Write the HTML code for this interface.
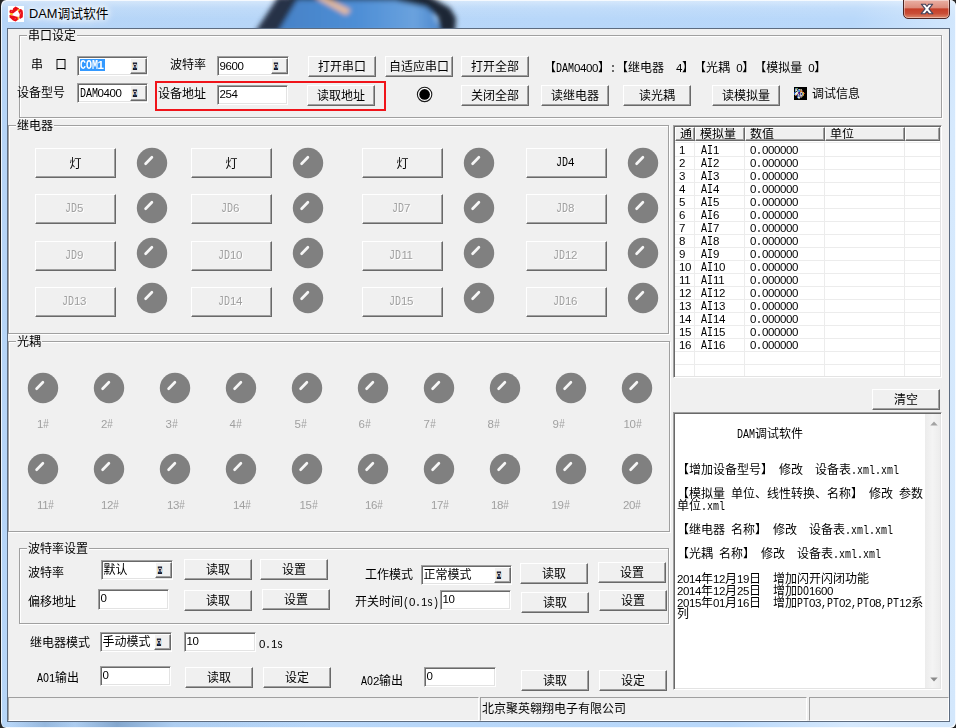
<!DOCTYPE html>
<html lang="zh"><head><meta charset="utf-8"><title>DAM调试软件</title>
<style>
html,body{margin:0;padding:0}
body{width:956px;height:728px;overflow:hidden;position:relative;background:#262626;font-family:"Liberation Mono","Noto Sans CJK SC",sans-serif;font-size:12px;color:#000;text-spacing-trim:space-all}
*{box-sizing:content-box}
.abs,.t,.btn,.edit,.grp,.led{position:absolute}
.t{white-space:nowrap;line-height:12px;height:12px;font-size:12px}
.l{display:inline-block;font-family:"Liberation Mono",monospace;font-size:12px;transform:scaleX(0.8332);transform-origin:0 50%;line-height:12px;vertical-align:baseline}
.gl{background:#f0f0f0;padding:0 1px}
.btn{background:#f0f0f0;border:1px solid;border-color:#fff #696969 #696969 #fff;box-shadow:inset -1px -1px 0 #a0a0a0,inset 1px 1px 0 #f0f0f0;padding:2.5px 1px 0 1px;text-align:center;white-space:nowrap;font-size:12px;overflow:hidden}
.btn.dis{color:#a0a0a0;text-shadow:1px 1px 0 #fff}
.edit{background:#fff;border:1px solid;border-color:#a0a0a0 #fff #fff #a0a0a0;box-shadow:inset 1px 1px 0 #696969,inset -1px -1px 0 #e3e3e3;padding:1px;overflow:hidden}
.et{position:absolute;left:1.5px;top:2px;line-height:12px;white-space:nowrap}
.ct{left:1.5px;top:3px}
.cj{top:4px}
.sel{background:#3399ff;color:#fff;display:inline-block;height:12px;padding-right:1px;position:relative;top:-1px}
.sel .l,.sel .d{font-weight:bold}
.cb{position:absolute;right:0;top:1px;width:13px;background:#f0f0f0;border:1px solid;border-color:#fff #696969 #696969 #fff;box-shadow:inset -1px -1px 0 #a0a0a0;padding:1px}
.cb svg{position:absolute;left:1px;top:2.6px}
.grp{border:1px solid #a0a0a0;box-shadow:1px 1px 0 #fff,inset 1px 1px 0 #fff}
.d{font-family:"Liberation Sans",sans-serif;font-size:11.5px;letter-spacing:-0.396px}
.dt{color:#a0a0a0}
</style></head><body>

<div class="abs" id="frame" style="left:0;top:0;width:955px;height:728px;border-left:1px solid #1c1c1c;border-radius:6px 6px 6px 6px;overflow:hidden;background:linear-gradient(180deg,rgba(255,255,255,.45) 0,rgba(255,255,255,.13) 8px,rgba(255,255,255,0) 19px),linear-gradient(100deg,#b6d5f7 0,#b9d8fa 79%,#d6e9fd 90%,#d3e7fc 100%);box-shadow:inset 1px 1px 0 rgba(255,255,255,.75),inset -1px -1px 0 rgba(255,255,255,.8)">
<svg class="abs" style="left:0;top:0" width="956" height="29" viewBox="0 0 956 29"><defs><filter id="bl" x="-10%" y="-60%" width="120%" height="220%"><feGaussianBlur stdDeviation="2.8"/></filter><linearGradient id="bg1" x1="0" x2="1" y1="0" y2="0"><stop offset="0" stop-color="#447fc4"/><stop offset=".55" stop-color="#4f8fd6"/><stop offset=".85" stop-color="#6aa2de"/><stop offset="1" stop-color="#4a86cc"/></linearGradient></defs><g filter="url(#bl)"><polygon points="286,-3 424,-3 440,32 262,32" fill="url(#bg1)"/><polygon points="277,-3 298,-3 277,32 254,32" fill="#253247"/><polygon points="288,-5 420,-5 420,0.5 288,0" fill="#243043"/><polygon points="396,-5 426,-5 449,8 455,18 454,32 439,32 437,17 425,7 396,1" fill="#1b2636"/><polygon points="313,-3 323,-3 350,10 345,15" fill="#ecbd98"/></g></svg>
<div class="abs" style="left:8px;top:722px;width:300px;height:5px;background:linear-gradient(90deg,rgba(90,130,175,0) 0,rgba(90,130,175,.35) 12%,rgba(90,130,175,.1) 22%,rgba(80,120,165,.5) 36%,rgba(90,130,175,.1) 55%,rgba(90,130,175,0) 100%)"></div>
</div>
<svg class="abs" style="left:8px;top:6px" width="16" height="16" viewBox="0 0 16 16"><rect width="16" height="16" fill="#fff"/><defs><filter id="ib" x="-20%" y="-20%" width="140%" height="140%"><feGaussianBlur stdDeviation=".35"/></filter></defs><g filter="url(#ib)"><path d="M1.6 6.6L2.2 7.6 5 7.4 9.2 4.3 11.2 2.4 7.6 .5 5.2 2.2 4.6 4 2.4 3.8 1.4 5z" fill="#ea0f14"/><path d="M9.6 3.5L10.3 5.8 11.8 8.2 11.2 11.8 12 13 14.8 11.2 15 7 14.6 4.4 13 2.9z" fill="#ea0f14"/><path d="M1.4 8.9L1.7 11.5 5 14.4 7.6 15.6 10.4 13.6 9.8 11 4.6 9.6z" fill="#ea0f14"/><path d="M1.7 6.8L4.9 7.3 4.4 9.4 2.2 8.8z" fill="#f9b81c"/><path d="M9.2 3.7L11.7 3.1 11.5 4.6 10.2 5.4z" fill="#fbc41e"/><path d="M9.4 10.6L10.8 10.8 10.9 13.2 9.9 14z" fill="#f9b81c"/><path d="M3 5.2q1 .6 1.6-.6M12.6 6q-.8 1 .2 2.2M6.4 13q1 .2 1.4-.8" stroke="#f46a6a" stroke-width=".7" fill="none"/></g></svg>
<div class="abs" style="left:29px;top:6px;font-family:'Liberation Sans','Noto Sans CJK SC',sans-serif;font-size:12.8px;line-height:16px;white-space:nowrap;text-shadow:0 0 5px #fff,0 0 7px #fff,0 0 10px #fff,0 0 12px rgba(255,255,255,.8)">DAM调试软件</div>
<div class="abs" style="left:903px;top:-1px;width:45px;height:18px;border:1px solid #4a2422;border-radius:0 0 5px 5px;background:linear-gradient(#eab0a4 0,#dd8d7d 42%,#c53f29 50%,#c94e37 75%,#dc8a6e 100%);box-shadow:inset 0 0 0 1px rgba(255,255,255,.4)"><svg style="position:absolute;left:16px;top:3.2px" width="14" height="12" viewBox="0 0 14 12"><path d="M1.3 1.2h3.9l1.8 2.3 1.8-2.3h3.9L8.9 5.8l3.9 4.9H8.8L7 8.3 5.2 10.7H1.2l3.9-4.9z" fill="#fff" stroke="#45435a" stroke-width="1.1" stroke-linejoin="round"/></svg></div>
<div class="abs" style="left:7px;top:28px;width:943px;height:694px;background:#5d6c80"></div>
<div class="abs" style="left:8px;top:29px;width:941px;height:692px;background:#f0f0f0"></div>
<div class="abs" id="client" style="left:0;top:0;width:956px;height:728px;will-change:transform">
<div class="grp" style="left:19px;top:35px;width:921px;height:81px"></div>
<div class="t gl" style="left:27px;top:31px">串口设定</div>
<div class="t " style="left:31px;top:60px;letter-spacing:0;word-spacing:0">串<span class="l" style="margin-right:-2.40px">&nbsp;&nbsp;</span>口</div>
<div class="edit" style="left:77px;top:56px;width:67px;height:16px"><div class="et ct"><span class="sel"><span class="l" style="margin-right:-3.60px">COM</span><span class="d">1</span></span></div><div class="cb" style="height:12px"><svg width="6" height="8.6" viewBox="0 0 7 9" preserveAspectRatio="none"><path d="M.2 .5h1v8h-1z" fill="#f3d27a" opacity=".7"/><path d="M5.6 .5h1v8h-1z" fill="#8fd6f5" opacity=".7"/><path d="M1 .4H5.8V2.2L4.2 4.3V4.9L5.8 6.9V8.6H1V6.9L2.6 4.9V4.3L1 2.2Z" fill="#15152a"/><path d="M1.8 2h3.2v.9H1.8z" fill="#fff"/><path d="M2.9 5.4l.5-.6.5.6 .6 1.2H2.3z" fill="#5b9fe0"/><path d="M1.2 3.2l1 .9-1 .9zM5.6 3.2l-1 .9 1 .9z" fill="#c0392b" opacity=".55"/></svg></div></div>
<div class="t " style="left:170px;top:60px;">波特率</div>
<div class="edit" style="left:217px;top:56px;width:68px;height:16px"><div class="et ct"><span class="d">9600</span></div><div class="cb" style="height:12px"><svg width="6" height="8.6" viewBox="0 0 7 9" preserveAspectRatio="none"><path d="M.2 .5h1v8h-1z" fill="#f3d27a" opacity=".7"/><path d="M5.6 .5h1v8h-1z" fill="#8fd6f5" opacity=".7"/><path d="M1 .4H5.8V2.2L4.2 4.3V4.9L5.8 6.9V8.6H1V6.9L2.6 4.9V4.3L1 2.2Z" fill="#15152a"/><path d="M1.8 2h3.2v.9H1.8z" fill="#fff"/><path d="M2.9 5.4l.5-.6.5.6 .6 1.2H2.3z" fill="#5b9fe0"/><path d="M1.2 3.2l1 .9-1 .9zM5.6 3.2l-1 .9 1 .9z" fill="#c0392b" opacity=".55"/></svg></div></div>
<div class="btn" style="left:308px;top:56px;width:64px;height:16.5px;line-height:17px">打开串口</div>
<div class="btn" style="left:385px;top:56px;width:64px;height:16.5px;line-height:17px">自适应串口</div>
<div class="btn" style="left:461px;top:56px;width:64px;height:16.5px;line-height:17px">打开全部</div>
<div class="t " style="left:544px;top:62px;">【<span class="l" style="margin-right:-3.60px">DAM</span><span class="d">0400</span>】<span class="l" style="margin-right:-1.20px">:</span>【继电器<span class="l" style="margin-right:-2.40px">&nbsp;&nbsp;</span><span class="d">4</span>】【光耦<span class="l" style="margin-right:-1.20px">&nbsp;</span><span class="d">0</span>】【模拟量<span class="l" style="margin-right:-1.20px">&nbsp;</span><span class="d">0</span>】</div>
<div class="t " style="left:17px;top:88px;">设备型号</div>
<div class="edit" style="left:77px;top:83px;width:67px;height:16px"><div class="et ct"><span class="l" style="margin-right:-3.60px">DAM</span><span class="d">0400</span></div><div class="cb" style="height:12px"><svg width="6" height="8.6" viewBox="0 0 7 9" preserveAspectRatio="none"><path d="M.2 .5h1v8h-1z" fill="#f3d27a" opacity=".7"/><path d="M5.6 .5h1v8h-1z" fill="#8fd6f5" opacity=".7"/><path d="M1 .4H5.8V2.2L4.2 4.3V4.9L5.8 6.9V8.6H1V6.9L2.6 4.9V4.3L1 2.2Z" fill="#15152a"/><path d="M1.8 2h3.2v.9H1.8z" fill="#fff"/><path d="M2.9 5.4l.5-.6.5.6 .6 1.2H2.3z" fill="#5b9fe0"/><path d="M1.2 3.2l1 .9-1 .9zM5.6 3.2l-1 .9 1 .9z" fill="#c0392b" opacity=".55"/></svg></div></div>
<div class="abs" style="left:155px;top:81px;width:227px;height:25.5px;border:2px solid #f0141a"></div>
<div class="t " style="left:158px;top:89px;">设备地址</div>
<div class="edit" style="left:217px;top:85px;width:67px;height:16px"><div class="et"><span class="d">254</span></div></div>
<div class="btn" style="left:307px;top:85px;width:64px;height:16.5px;line-height:17px">读取地址</div>
<svg class="abs" style="left:416px;top:86px" width="17" height="17" viewBox="0 0 17 17"><circle cx="8.6" cy="8.4" r="7.2" fill="#fff" stroke="#1a1a1a" stroke-width="1.1"/><circle cx="8.6" cy="8.4" r="5.3" fill="#000"/></svg>
<div class="btn" style="left:461px;top:85px;width:64px;height:16.5px;line-height:17px">关闭全部</div>
<div class="btn" style="left:541px;top:85px;width:64px;height:16.5px;line-height:17px">读继电器</div>
<div class="btn" style="left:623px;top:85px;width:64px;height:16.5px;line-height:17px">读光耦</div>
<div class="btn" style="left:712px;top:85px;width:64px;height:16.5px;line-height:17px">读模拟量</div>
<svg class="abs" style="left:794px;top:87px" width="13" height="13" viewBox="0 0 13 13"><rect width="13" height="13" fill="#000"/><defs><filter id="nb"><feGaussianBlur stdDeviation=".35"/></filter></defs><g filter="url(#nb)"><path d="M1 1h1v1h-1z" fill="#3d6fb0"/><path d="M2 1h1v1h-1z" fill="#7aa06a"/><path d="M3 1h1v1h-1z" fill="#5b8f6a"/><path d="M1 2h1v1h-1z" fill="#9ab0b8"/><path d="M2 2h1v1h-1z" fill="#c8b89a"/><path d="M3 2h1v1h-1z" fill="#3a3030"/><path d="M4 2h1v1h-1z" fill="#4a8ad8"/><path d="M5 2h1v1h-1z" fill="#d8c8a0"/><path d="M6 2h1v1h-1z" fill="#8a7a60"/><path d="M7 2h1v1h-1z" fill="#b0a890"/><path d="M1 3h1v1h-1z" fill="#8ac0d8"/><path d="M2 3h1v1h-1z" fill="#e8e0d0"/><path d="M3 3h1v1h-1z" fill="#6a5a8a"/><path d="M4 3h1v1h-1z" fill="#3a7ad0"/><path d="M5 3h1v1h-1z" fill="#4a90e0"/><path d="M6 3h1v1h-1z" fill="#c07a30"/><path d="M7 3h1v1h-1z" fill="#a8a090"/><path d="M8 3h1v1h-1z" fill="#5a2a20"/><path d="M1 4h1v1h-1z" fill="#58a078"/><path d="M2 4h1v1h-1z" fill="#303040"/><path d="M3 4h1v1h-1z" fill="#a0b0c0"/><path d="M4 4h1v1h-1z" fill="#68c0a0"/><path d="M5 4h1v1h-1z" fill="#3a70c0"/><path d="M6 4h1v1h-1z" fill="#c86a20"/><path d="M7 4h1v1h-1z" fill="#d89040"/><path d="M8 4h1v1h-1z" fill="#7a3020"/><path d="M0 5h1v1h-1z" fill="#2040a0"/><path d="M1 5h1v1h-1z" fill="#3050b0"/><path d="M2 5h1v1h-1z" fill="#e8e8f0"/><path d="M3 5h1v1h-1z" fill="#f0e8c0"/><path d="M4 5h1v1h-1z" fill="#5a2a90"/><path d="M5 5h1v1h-1z" fill="#401880"/><path d="M6 5h1v1h-1z" fill="#b0a8c0"/><path d="M7 5h1v1h-1z" fill="#d0c8d0"/><path d="M8 5h1v1h-1z" fill="#c09050"/><path d="M9 5h1v1h-1z" fill="#e0a040"/><path d="M0 6h1v1h-1z" fill="#2858a8"/><path d="M1 6h1v1h-1z" fill="#d8e8f0"/><path d="M2 6h1v1h-1z" fill="#f8f0c8"/><path d="M3 6h1v1h-1z" fill="#e8d8b0"/><path d="M4 6h1v1h-1z" fill="#6a3aa0"/><path d="M5 6h1v1h-1z" fill="#5828a0"/><path d="M6 6h1v1h-1z" fill="#90c0b0"/><path d="M7 6h1v1h-1z" fill="#401870"/><path d="M8 6h1v1h-1z" fill="#70c8a8"/><path d="M9 6h1v1h-1z" fill="#e09830"/><path d="M10 6h1v1h-1z" fill="#b03020"/><path d="M0 7h1v1h-1z" fill="#3088b8"/><path d="M1 7h1v1h-1z" fill="#c0d0e0"/><path d="M2 7h1v1h-1z" fill="#e8e0c0"/><path d="M3 7h1v1h-1z" fill="#7a3a90"/><path d="M4 7h1v1h-1z" fill="#b0e0c8"/><path d="M5 7h1v1h-1z" fill="#4a2a80"/><path d="M6 7h1v1h-1z" fill="#a8b0d0"/><path d="M7 7h1v1h-1z" fill="#5a3a90"/><path d="M8 7h1v1h-1z" fill="#80d0b0"/><path d="M9 7h1v1h-1z" fill="#d8a040"/><path d="M1 8h1v1h-1z" fill="#c87a40"/><path d="M2 8h1v1h-1z" fill="#403048"/><path d="M3 8h1v1h-1z" fill="#5a4a80"/><path d="M4 8h1v1h-1z" fill="#80a8c8"/><path d="M5 8h1v1h-1z" fill="#7a6aa0"/><path d="M6 8h1v1h-1z" fill="#c0b8d8"/><path d="M7 8h1v1h-1z" fill="#d0c8e0"/><path d="M8 8h1v1h-1z" fill="#a09070"/><path d="M9 8h1v1h-1z" fill="#b07a30"/><path d="M3 9h1v1h-1z" fill="#3a5aa0"/><path d="M4 9h1v1h-1z" fill="#a0b8d0"/><path d="M5 9h1v1h-1z" fill="#6a80b0"/><path d="M6 9h1v1h-1z" fill="#8a80a0"/><path d="M7 9h1v1h-1z" fill="#a89880"/><path d="M8 9h1v1h-1z" fill="#6a6040"/><path d="M3 10h1v1h-1z" fill="#4a80d0"/><path d="M4 10h1v1h-1z" fill="#f0f0e0"/><path d="M5 10h1v1h-1z" fill="#e8e0b0"/><path d="M6 10h1v1h-1z" fill="#505060"/><path d="M7 10h1v1h-1z" fill="#606850"/><path d="M4 11h1v1h-1z" fill="#607090"/><path d="M5 11h1v1h-1z" fill="#8a8870"/></g></svg>
<div class="t " style="left:812px;top:89px;">调试信息</div>
<div class="grp" style="left:8px;top:125px;width:659px;height:207px"></div>
<div class="t gl" style="left:16px;top:121px">继电器</div>
<div class="btn" style="left:35px;top:148px;width:77px;height:25.5px;line-height:26px">灯</div>
<svg class="led" style="left:136px;top:147px" width="32" height="32" viewBox="0 0 32 32"><circle cx="16" cy="16" r="15.2" fill="#808080"/><path d="M9.6 16.7L15.9 10.2" stroke="#f6f6f6" stroke-width="2.7" stroke-linecap="round"/></svg>
<div class="btn" style="left:191px;top:148px;width:77px;height:25.5px;line-height:26px">灯</div>
<svg class="led" style="left:292px;top:147px" width="32" height="32" viewBox="0 0 32 32"><circle cx="16" cy="16" r="15.2" fill="#808080"/><path d="M9.6 16.7L15.9 10.2" stroke="#f6f6f6" stroke-width="2.7" stroke-linecap="round"/></svg>
<div class="btn" style="left:362px;top:148px;width:77px;height:25.5px;line-height:26px">灯</div>
<svg class="led" style="left:463px;top:147px" width="32" height="32" viewBox="0 0 32 32"><circle cx="16" cy="16" r="15.2" fill="#808080"/><path d="M9.6 16.7L15.9 10.2" stroke="#f6f6f6" stroke-width="2.7" stroke-linecap="round"/></svg>
<div class="btn" style="left:526px;top:148px;width:77px;height:25.5px;line-height:26px"><span style="position:relative;top:-2.3px;left:-1.5px"><span class="l" style="margin-right:-2.40px">JD</span><span class="d">4</span></span></div>
<svg class="led" style="left:627px;top:147px" width="32" height="32" viewBox="0 0 32 32"><circle cx="16" cy="16" r="15.2" fill="#808080"/><path d="M9.6 16.7L15.9 10.2" stroke="#f6f6f6" stroke-width="2.7" stroke-linecap="round"/></svg>
<div class="btn dis" style="left:35px;top:194px;width:77px;height:25.5px;line-height:26px"><span style="position:relative;top:-2.3px;left:-1.5px"><span class="l" style="margin-right:-2.40px">JD</span><span class="d">5</span></span></div>
<svg class="led" style="left:136px;top:192px" width="32" height="32" viewBox="0 0 32 32"><circle cx="16" cy="16" r="15.2" fill="#808080"/><path d="M9.6 16.7L15.9 10.2" stroke="#f6f6f6" stroke-width="2.7" stroke-linecap="round"/></svg>
<div class="btn dis" style="left:191px;top:194px;width:77px;height:25.5px;line-height:26px"><span style="position:relative;top:-2.3px;left:-1.5px"><span class="l" style="margin-right:-2.40px">JD</span><span class="d">6</span></span></div>
<svg class="led" style="left:292px;top:192px" width="32" height="32" viewBox="0 0 32 32"><circle cx="16" cy="16" r="15.2" fill="#808080"/><path d="M9.6 16.7L15.9 10.2" stroke="#f6f6f6" stroke-width="2.7" stroke-linecap="round"/></svg>
<div class="btn dis" style="left:362px;top:194px;width:77px;height:25.5px;line-height:26px"><span style="position:relative;top:-2.3px;left:-1.5px"><span class="l" style="margin-right:-2.40px">JD</span><span class="d">7</span></span></div>
<svg class="led" style="left:463px;top:192px" width="32" height="32" viewBox="0 0 32 32"><circle cx="16" cy="16" r="15.2" fill="#808080"/><path d="M9.6 16.7L15.9 10.2" stroke="#f6f6f6" stroke-width="2.7" stroke-linecap="round"/></svg>
<div class="btn dis" style="left:526px;top:194px;width:77px;height:25.5px;line-height:26px"><span style="position:relative;top:-2.3px;left:-1.5px"><span class="l" style="margin-right:-2.40px">JD</span><span class="d">8</span></span></div>
<svg class="led" style="left:627px;top:192px" width="32" height="32" viewBox="0 0 32 32"><circle cx="16" cy="16" r="15.2" fill="#808080"/><path d="M9.6 16.7L15.9 10.2" stroke="#f6f6f6" stroke-width="2.7" stroke-linecap="round"/></svg>
<div class="btn dis" style="left:35px;top:241px;width:77px;height:25.5px;line-height:26px"><span style="position:relative;top:-2.3px;left:-1.5px"><span class="l" style="margin-right:-2.40px">JD</span><span class="d">9</span></span></div>
<svg class="led" style="left:136px;top:237px" width="32" height="32" viewBox="0 0 32 32"><circle cx="16" cy="16" r="15.2" fill="#808080"/><path d="M9.6 16.7L15.9 10.2" stroke="#f6f6f6" stroke-width="2.7" stroke-linecap="round"/></svg>
<div class="btn dis" style="left:191px;top:241px;width:77px;height:25.5px;line-height:26px"><span style="position:relative;top:-2.3px;left:-1.5px"><span class="l" style="margin-right:-2.40px">JD</span><span class="d">10</span></span></div>
<svg class="led" style="left:292px;top:237px" width="32" height="32" viewBox="0 0 32 32"><circle cx="16" cy="16" r="15.2" fill="#808080"/><path d="M9.6 16.7L15.9 10.2" stroke="#f6f6f6" stroke-width="2.7" stroke-linecap="round"/></svg>
<div class="btn dis" style="left:362px;top:241px;width:77px;height:25.5px;line-height:26px"><span style="position:relative;top:-2.3px;left:-1.5px"><span class="l" style="margin-right:-2.40px">JD</span><span class="d">11</span></span></div>
<svg class="led" style="left:463px;top:237px" width="32" height="32" viewBox="0 0 32 32"><circle cx="16" cy="16" r="15.2" fill="#808080"/><path d="M9.6 16.7L15.9 10.2" stroke="#f6f6f6" stroke-width="2.7" stroke-linecap="round"/></svg>
<div class="btn dis" style="left:526px;top:241px;width:77px;height:25.5px;line-height:26px"><span style="position:relative;top:-2.3px;left:-1.5px"><span class="l" style="margin-right:-2.40px">JD</span><span class="d">12</span></span></div>
<svg class="led" style="left:627px;top:237px" width="32" height="32" viewBox="0 0 32 32"><circle cx="16" cy="16" r="15.2" fill="#808080"/><path d="M9.6 16.7L15.9 10.2" stroke="#f6f6f6" stroke-width="2.7" stroke-linecap="round"/></svg>
<div class="btn dis" style="left:35px;top:287px;width:77px;height:25.5px;line-height:26px"><span style="position:relative;top:-2.3px;left:-1.5px"><span class="l" style="margin-right:-2.40px">JD</span><span class="d">13</span></span></div>
<svg class="led" style="left:136px;top:282px" width="32" height="32" viewBox="0 0 32 32"><circle cx="16" cy="16" r="15.2" fill="#808080"/><path d="M9.6 16.7L15.9 10.2" stroke="#f6f6f6" stroke-width="2.7" stroke-linecap="round"/></svg>
<div class="btn dis" style="left:191px;top:287px;width:77px;height:25.5px;line-height:26px"><span style="position:relative;top:-2.3px;left:-1.5px"><span class="l" style="margin-right:-2.40px">JD</span><span class="d">14</span></span></div>
<svg class="led" style="left:292px;top:282px" width="32" height="32" viewBox="0 0 32 32"><circle cx="16" cy="16" r="15.2" fill="#808080"/><path d="M9.6 16.7L15.9 10.2" stroke="#f6f6f6" stroke-width="2.7" stroke-linecap="round"/></svg>
<div class="btn dis" style="left:362px;top:287px;width:77px;height:25.5px;line-height:26px"><span style="position:relative;top:-2.3px;left:-1.5px"><span class="l" style="margin-right:-2.40px">JD</span><span class="d">15</span></span></div>
<svg class="led" style="left:463px;top:282px" width="32" height="32" viewBox="0 0 32 32"><circle cx="16" cy="16" r="15.2" fill="#808080"/><path d="M9.6 16.7L15.9 10.2" stroke="#f6f6f6" stroke-width="2.7" stroke-linecap="round"/></svg>
<div class="btn dis" style="left:526px;top:287px;width:77px;height:25.5px;line-height:26px"><span style="position:relative;top:-2.3px;left:-1.5px"><span class="l" style="margin-right:-2.40px">JD</span><span class="d">16</span></span></div>
<svg class="led" style="left:627px;top:282px" width="32" height="32" viewBox="0 0 32 32"><circle cx="16" cy="16" r="15.2" fill="#808080"/><path d="M9.6 16.7L15.9 10.2" stroke="#f6f6f6" stroke-width="2.7" stroke-linecap="round"/></svg>
<div class="grp" style="left:8px;top:341px;width:660px;height:189px"></div>
<div class="t gl" style="left:16px;top:337px">光耦</div>
<svg class="led" style="left:27px;top:371.5px" width="32" height="32" viewBox="0 0 32 32"><circle cx="16" cy="16" r="15.2" fill="#808080"/><path d="M9.6 16.7L15.9 10.2" stroke="#f6f6f6" stroke-width="2.7" stroke-linecap="round"/></svg>
<svg class="led" style="left:27px;top:453px" width="32" height="32" viewBox="0 0 32 32"><circle cx="16" cy="16" r="15.2" fill="#808080"/><path d="M9.6 16.7L15.9 10.2" stroke="#f6f6f6" stroke-width="2.7" stroke-linecap="round"/></svg>
<svg class="led" style="left:93px;top:371.5px" width="32" height="32" viewBox="0 0 32 32"><circle cx="16" cy="16" r="15.2" fill="#808080"/><path d="M9.6 16.7L15.9 10.2" stroke="#f6f6f6" stroke-width="2.7" stroke-linecap="round"/></svg>
<svg class="led" style="left:93px;top:453px" width="32" height="32" viewBox="0 0 32 32"><circle cx="16" cy="16" r="15.2" fill="#808080"/><path d="M9.6 16.7L15.9 10.2" stroke="#f6f6f6" stroke-width="2.7" stroke-linecap="round"/></svg>
<svg class="led" style="left:159px;top:371.5px" width="32" height="32" viewBox="0 0 32 32"><circle cx="16" cy="16" r="15.2" fill="#808080"/><path d="M9.6 16.7L15.9 10.2" stroke="#f6f6f6" stroke-width="2.7" stroke-linecap="round"/></svg>
<svg class="led" style="left:159px;top:453px" width="32" height="32" viewBox="0 0 32 32"><circle cx="16" cy="16" r="15.2" fill="#808080"/><path d="M9.6 16.7L15.9 10.2" stroke="#f6f6f6" stroke-width="2.7" stroke-linecap="round"/></svg>
<svg class="led" style="left:225px;top:371.5px" width="32" height="32" viewBox="0 0 32 32"><circle cx="16" cy="16" r="15.2" fill="#808080"/><path d="M9.6 16.7L15.9 10.2" stroke="#f6f6f6" stroke-width="2.7" stroke-linecap="round"/></svg>
<svg class="led" style="left:225px;top:453px" width="32" height="32" viewBox="0 0 32 32"><circle cx="16" cy="16" r="15.2" fill="#808080"/><path d="M9.6 16.7L15.9 10.2" stroke="#f6f6f6" stroke-width="2.7" stroke-linecap="round"/></svg>
<svg class="led" style="left:291px;top:371.5px" width="32" height="32" viewBox="0 0 32 32"><circle cx="16" cy="16" r="15.2" fill="#808080"/><path d="M9.6 16.7L15.9 10.2" stroke="#f6f6f6" stroke-width="2.7" stroke-linecap="round"/></svg>
<svg class="led" style="left:291px;top:453px" width="32" height="32" viewBox="0 0 32 32"><circle cx="16" cy="16" r="15.2" fill="#808080"/><path d="M9.6 16.7L15.9 10.2" stroke="#f6f6f6" stroke-width="2.7" stroke-linecap="round"/></svg>
<svg class="led" style="left:357px;top:371.5px" width="32" height="32" viewBox="0 0 32 32"><circle cx="16" cy="16" r="15.2" fill="#808080"/><path d="M9.6 16.7L15.9 10.2" stroke="#f6f6f6" stroke-width="2.7" stroke-linecap="round"/></svg>
<svg class="led" style="left:357px;top:453px" width="32" height="32" viewBox="0 0 32 32"><circle cx="16" cy="16" r="15.2" fill="#808080"/><path d="M9.6 16.7L15.9 10.2" stroke="#f6f6f6" stroke-width="2.7" stroke-linecap="round"/></svg>
<svg class="led" style="left:423px;top:371.5px" width="32" height="32" viewBox="0 0 32 32"><circle cx="16" cy="16" r="15.2" fill="#808080"/><path d="M9.6 16.7L15.9 10.2" stroke="#f6f6f6" stroke-width="2.7" stroke-linecap="round"/></svg>
<svg class="led" style="left:423px;top:453px" width="32" height="32" viewBox="0 0 32 32"><circle cx="16" cy="16" r="15.2" fill="#808080"/><path d="M9.6 16.7L15.9 10.2" stroke="#f6f6f6" stroke-width="2.7" stroke-linecap="round"/></svg>
<svg class="led" style="left:489px;top:371.5px" width="32" height="32" viewBox="0 0 32 32"><circle cx="16" cy="16" r="15.2" fill="#808080"/><path d="M9.6 16.7L15.9 10.2" stroke="#f6f6f6" stroke-width="2.7" stroke-linecap="round"/></svg>
<svg class="led" style="left:489px;top:453px" width="32" height="32" viewBox="0 0 32 32"><circle cx="16" cy="16" r="15.2" fill="#808080"/><path d="M9.6 16.7L15.9 10.2" stroke="#f6f6f6" stroke-width="2.7" stroke-linecap="round"/></svg>
<svg class="led" style="left:555px;top:371.5px" width="32" height="32" viewBox="0 0 32 32"><circle cx="16" cy="16" r="15.2" fill="#808080"/><path d="M9.6 16.7L15.9 10.2" stroke="#f6f6f6" stroke-width="2.7" stroke-linecap="round"/></svg>
<svg class="led" style="left:555px;top:453px" width="32" height="32" viewBox="0 0 32 32"><circle cx="16" cy="16" r="15.2" fill="#808080"/><path d="M9.6 16.7L15.9 10.2" stroke="#f6f6f6" stroke-width="2.7" stroke-linecap="round"/></svg>
<svg class="led" style="left:621px;top:371.5px" width="32" height="32" viewBox="0 0 32 32"><circle cx="16" cy="16" r="15.2" fill="#808080"/><path d="M9.6 16.7L15.9 10.2" stroke="#f6f6f6" stroke-width="2.7" stroke-linecap="round"/></svg>
<svg class="led" style="left:621px;top:453px" width="32" height="32" viewBox="0 0 32 32"><circle cx="16" cy="16" r="15.2" fill="#808080"/><path d="M9.6 16.7L15.9 10.2" stroke="#f6f6f6" stroke-width="2.7" stroke-linecap="round"/></svg>
<div class="t dt" style="left:37px;top:418px;"><span class="d">1</span><span class="l" style="margin-right:-1.20px">#</span></div>
<div class="t dt" style="left:37px;top:499px;"><span class="d">11</span><span class="l" style="margin-right:-1.20px">#</span></div>
<div class="t dt" style="left:101px;top:418px;"><span class="d">2</span><span class="l" style="margin-right:-1.20px">#</span></div>
<div class="t dt" style="left:101px;top:499px;"><span class="d">12</span><span class="l" style="margin-right:-1.20px">#</span></div>
<div class="t dt" style="left:165.5px;top:418px;"><span class="d">3</span><span class="l" style="margin-right:-1.20px">#</span></div>
<div class="t dt" style="left:167px;top:499px;"><span class="d">13</span><span class="l" style="margin-right:-1.20px">#</span></div>
<div class="t dt" style="left:229.5px;top:418px;"><span class="d">4</span><span class="l" style="margin-right:-1.20px">#</span></div>
<div class="t dt" style="left:233px;top:499px;"><span class="d">14</span><span class="l" style="margin-right:-1.20px">#</span></div>
<div class="t dt" style="left:294.5px;top:418px;"><span class="d">5</span><span class="l" style="margin-right:-1.20px">#</span></div>
<div class="t dt" style="left:299.5px;top:499px;"><span class="d">15</span><span class="l" style="margin-right:-1.20px">#</span></div>
<div class="t dt" style="left:358.5px;top:418px;"><span class="d">6</span><span class="l" style="margin-right:-1.20px">#</span></div>
<div class="t dt" style="left:365px;top:499px;"><span class="d">16</span><span class="l" style="margin-right:-1.20px">#</span></div>
<div class="t dt" style="left:423.5px;top:418px;"><span class="d">7</span><span class="l" style="margin-right:-1.20px">#</span></div>
<div class="t dt" style="left:431px;top:499px;"><span class="d">17</span><span class="l" style="margin-right:-1.20px">#</span></div>
<div class="t dt" style="left:487.5px;top:418px;"><span class="d">8</span><span class="l" style="margin-right:-1.20px">#</span></div>
<div class="t dt" style="left:491px;top:499px;"><span class="d">18</span><span class="l" style="margin-right:-1.20px">#</span></div>
<div class="t dt" style="left:552.5px;top:418px;"><span class="d">9</span><span class="l" style="margin-right:-1.20px">#</span></div>
<div class="t dt" style="left:551.5px;top:499px;"><span class="d">19</span><span class="l" style="margin-right:-1.20px">#</span></div>
<div class="t dt" style="left:623.5px;top:418px;"><span class="d">10</span><span class="l" style="margin-right:-1.20px">#</span></div>
<div class="t dt" style="left:623px;top:499px;"><span class="d">20</span><span class="l" style="margin-right:-1.20px">#</span></div>
<div class="grp" style="left:19px;top:548px;width:648px;height:74px"></div>
<div class="t gl" style="left:27px;top:544px">波特率设置</div>
<div class="t " style="left:28px;top:568px;">波特率</div>
<div class="edit" style="left:101px;top:560px;width:68px;height:16px"><div class="et ct cj">默认</div><div class="cb" style="height:12px"><svg width="6" height="8.6" viewBox="0 0 7 9" preserveAspectRatio="none"><path d="M.2 .5h1v8h-1z" fill="#f3d27a" opacity=".7"/><path d="M5.6 .5h1v8h-1z" fill="#8fd6f5" opacity=".7"/><path d="M1 .4H5.8V2.2L4.2 4.3V4.9L5.8 6.9V8.6H1V6.9L2.6 4.9V4.3L1 2.2Z" fill="#15152a"/><path d="M1.8 2h3.2v.9H1.8z" fill="#fff"/><path d="M2.9 5.4l.5-.6.5.6 .6 1.2H2.3z" fill="#5b9fe0"/><path d="M1.2 3.2l1 .9-1 .9zM5.6 3.2l-1 .9 1 .9z" fill="#c0392b" opacity=".55"/></svg></div></div>
<div class="btn" style="left:184px;top:559px;width:64px;height:16.5px;line-height:17px">读取</div>
<div class="btn" style="left:260px;top:559px;width:64px;height:16.5px;line-height:17px">设置</div>
<div class="t " style="left:28px;top:597px;">偏移地址</div>
<div class="edit" style="left:98px;top:589px;width:67px;height:17px"><div class="et"><span class="d">0</span></div></div>
<div class="btn" style="left:184px;top:590px;width:64px;height:16.5px;line-height:17px">读取</div>
<div class="btn" style="left:262px;top:589px;width:64px;height:16.5px;line-height:17px">设置</div>
<div class="t " style="left:365px;top:570px;">工作模式</div>
<div class="edit" style="left:421px;top:565px;width:87px;height:16px"><div class="et ct cj">正常模式</div><div class="cb" style="height:12px"><svg width="6" height="8.6" viewBox="0 0 7 9" preserveAspectRatio="none"><path d="M.2 .5h1v8h-1z" fill="#f3d27a" opacity=".7"/><path d="M5.6 .5h1v8h-1z" fill="#8fd6f5" opacity=".7"/><path d="M1 .4H5.8V2.2L4.2 4.3V4.9L5.8 6.9V8.6H1V6.9L2.6 4.9V4.3L1 2.2Z" fill="#15152a"/><path d="M1.8 2h3.2v.9H1.8z" fill="#fff"/><path d="M2.9 5.4l.5-.6.5.6 .6 1.2H2.3z" fill="#5b9fe0"/><path d="M1.2 3.2l1 .9-1 .9zM5.6 3.2l-1 .9 1 .9z" fill="#c0392b" opacity=".55"/></svg></div></div>
<div class="btn" style="left:520px;top:563px;width:64px;height:16.5px;line-height:17px">读取</div>
<div class="btn" style="left:598px;top:562px;width:64px;height:16.5px;line-height:17px">设置</div>
<div class="t " style="left:355px;top:596px;">开关时间<span class="l" style="margin-right:-1.20px">(</span><span class="d">0</span><span class="l" style="margin-right:-1.20px">.</span><span class="d">1</span><span class="l" style="margin-right:-2.40px">s)</span></div>
<div class="edit" style="left:440px;top:590px;width:67px;height:16px"><div class="et"><span class="d">10</span></div></div>
<div class="btn" style="left:521px;top:592px;width:64px;height:16.5px;line-height:17px">读取</div>
<div class="btn" style="left:599px;top:590px;width:64px;height:16.5px;line-height:17px">设置</div>
<div class="t " style="left:30px;top:638px;">继电器模式</div>
<div class="edit" style="left:100px;top:632px;width:68px;height:16px"><div class="et ct cj">手动模式</div><div class="cb" style="height:12px"><svg width="6" height="8.6" viewBox="0 0 7 9" preserveAspectRatio="none"><path d="M.2 .5h1v8h-1z" fill="#f3d27a" opacity=".7"/><path d="M5.6 .5h1v8h-1z" fill="#8fd6f5" opacity=".7"/><path d="M1 .4H5.8V2.2L4.2 4.3V4.9L5.8 6.9V8.6H1V6.9L2.6 4.9V4.3L1 2.2Z" fill="#15152a"/><path d="M1.8 2h3.2v.9H1.8z" fill="#fff"/><path d="M2.9 5.4l.5-.6.5.6 .6 1.2H2.3z" fill="#5b9fe0"/><path d="M1.2 3.2l1 .9-1 .9zM5.6 3.2l-1 .9 1 .9z" fill="#c0392b" opacity=".55"/></svg></div></div>
<div class="edit" style="left:184px;top:632px;width:68px;height:16px"><div class="et"><span class="d">10</span></div></div>
<div class="t " style="left:259px;top:638px;"><span class="d">0</span><span class="l" style="margin-right:-1.20px">.</span><span class="d">1</span><span class="l" style="margin-right:-1.20px">s</span></div>
<div class="t " style="left:37px;top:672px;"><span class="l" style="margin-right:-2.40px">AO</span><span class="d">1</span>输出</div>
<div class="edit" style="left:100px;top:666px;width:67px;height:16px"><div class="et"><span class="d">0</span></div></div>
<div class="btn" style="left:185px;top:667px;width:64px;height:16.5px;line-height:17px">读取</div>
<div class="btn" style="left:263px;top:667px;width:64px;height:16.5px;line-height:17px">设定</div>
<div class="t " style="left:361px;top:675px;"><span class="l" style="margin-right:-2.40px">AO</span><span class="d">2</span>输出</div>
<div class="edit" style="left:424px;top:667px;width:68px;height:16px"><div class="et"><span class="d">0</span></div></div>
<div class="btn" style="left:521px;top:670px;width:64px;height:16.5px;line-height:17px">读取</div>
<div class="btn" style="left:599px;top:670px;width:64px;height:16.5px;line-height:17px">设定</div>
<div class="abs" style="left:8px;top:697px;width:469px;height:22px;border:1px solid;border-color:#a0a0a0 #fff #fff #a0a0a0"></div>
<div class="abs" style="left:480px;top:697px;width:325px;height:22px;border:1px solid;border-color:#a0a0a0 #fff #fff #a0a0a0"></div>
<div class="abs" style="left:809px;top:697px;width:138px;height:22px;border:1px solid;border-color:#a0a0a0 #fff #fff #a0a0a0"></div>
<div class="t " style="left:482px;top:704px;">北京聚英翱翔电子有限公司</div>
<div class="edit" style="left:673px;top:125px;width:265px;height:249px"></div>
<div class="abs hd" style="left:675px;top:127px;width:18px;height:12px;background:#f0f0f0;border:1px solid;border-color:#fff #696969 #696969 #fff;box-shadow:inset -1px -1px 0 #a0a0a0;overflow:hidden"><div class="t" style="left:4px;top:1px">通</div></div>
<div class="abs hd" style="left:695px;top:127px;width:48px;height:12px;background:#f0f0f0;border:1px solid;border-color:#fff #696969 #696969 #fff;box-shadow:inset -1px -1px 0 #a0a0a0;overflow:hidden"><div class="t" style="left:4px;top:1px">模拟量</div></div>
<div class="abs hd" style="left:745px;top:127px;width:78px;height:12px;background:#f0f0f0;border:1px solid;border-color:#fff #696969 #696969 #fff;box-shadow:inset -1px -1px 0 #a0a0a0;overflow:hidden"><div class="t" style="left:4px;top:1px">数值</div></div>
<div class="abs hd" style="left:825px;top:127px;width:78px;height:12px;background:#f0f0f0;border:1px solid;border-color:#fff #696969 #696969 #fff;box-shadow:inset -1px -1px 0 #a0a0a0;overflow:hidden"><div class="t" style="left:4px;top:1px">单位</div></div>
<div class="abs hd" style="left:905px;top:127px;width:33px;height:12px;background:#f0f0f0;border:1px solid;border-color:#fff #696969 #696969 #fff;box-shadow:inset -1px -1px 0 #a0a0a0;overflow:hidden"><div class="t" style="left:4px;top:1px"></div></div>
<div class="abs" style="left:675px;top:142.4px;width:265px;height:1px;background:#ececec"></div>
<div class="abs" style="left:675px;top:155.5px;width:265px;height:1px;background:#ececec"></div>
<div class="abs" style="left:675px;top:168.5px;width:265px;height:1px;background:#ececec"></div>
<div class="abs" style="left:675px;top:181.6px;width:265px;height:1px;background:#ececec"></div>
<div class="abs" style="left:675px;top:194.6px;width:265px;height:1px;background:#ececec"></div>
<div class="abs" style="left:675px;top:207.7px;width:265px;height:1px;background:#ececec"></div>
<div class="abs" style="left:675px;top:220.7px;width:265px;height:1px;background:#ececec"></div>
<div class="abs" style="left:675px;top:233.8px;width:265px;height:1px;background:#ececec"></div>
<div class="abs" style="left:675px;top:246.8px;width:265px;height:1px;background:#ececec"></div>
<div class="abs" style="left:675px;top:259.9px;width:265px;height:1px;background:#ececec"></div>
<div class="abs" style="left:675px;top:272.9px;width:265px;height:1px;background:#ececec"></div>
<div class="abs" style="left:675px;top:286.0px;width:265px;height:1px;background:#ececec"></div>
<div class="abs" style="left:675px;top:299.0px;width:265px;height:1px;background:#ececec"></div>
<div class="abs" style="left:675px;top:312.1px;width:265px;height:1px;background:#ececec"></div>
<div class="abs" style="left:675px;top:325.1px;width:265px;height:1px;background:#ececec"></div>
<div class="abs" style="left:675px;top:338.1px;width:265px;height:1px;background:#ececec"></div>
<div class="abs" style="left:675px;top:351.2px;width:265px;height:1px;background:#ececec"></div>
<div class="abs" style="left:675px;top:364.2px;width:265px;height:1px;background:#ececec"></div>
<div class="abs" style="left:694px;top:141px;width:1px;height:235px;background:#ececec"></div>
<div class="abs" style="left:744px;top:141px;width:1px;height:235px;background:#ececec"></div>
<div class="abs" style="left:824px;top:141px;width:1px;height:235px;background:#ececec"></div>
<div class="abs" style="left:904px;top:141px;width:1px;height:235px;background:#ececec"></div>
<div class="t " style="left:679px;top:143.6px;"><span class="d">1</span></div>
<div class="t " style="left:701px;top:143.6px;"><span class="l" style="margin-right:-2.40px">AI</span><span class="d">1</span></div>
<div class="t " style="left:750px;top:143.6px;"><span class="d">0</span><span class="l" style="margin-right:-1.20px">.</span><span class="d">000000</span></div>
<div class="t " style="left:679px;top:156.64px;"><span class="d">2</span></div>
<div class="t " style="left:701px;top:156.64px;"><span class="l" style="margin-right:-2.40px">AI</span><span class="d">2</span></div>
<div class="t " style="left:750px;top:156.64px;"><span class="d">0</span><span class="l" style="margin-right:-1.20px">.</span><span class="d">000000</span></div>
<div class="t " style="left:679px;top:169.68px;"><span class="d">3</span></div>
<div class="t " style="left:701px;top:169.68px;"><span class="l" style="margin-right:-2.40px">AI</span><span class="d">3</span></div>
<div class="t " style="left:750px;top:169.68px;"><span class="d">0</span><span class="l" style="margin-right:-1.20px">.</span><span class="d">000000</span></div>
<div class="t " style="left:679px;top:182.72px;"><span class="d">4</span></div>
<div class="t " style="left:701px;top:182.72px;"><span class="l" style="margin-right:-2.40px">AI</span><span class="d">4</span></div>
<div class="t " style="left:750px;top:182.72px;"><span class="d">0</span><span class="l" style="margin-right:-1.20px">.</span><span class="d">000000</span></div>
<div class="t " style="left:679px;top:195.76px;"><span class="d">5</span></div>
<div class="t " style="left:701px;top:195.76px;"><span class="l" style="margin-right:-2.40px">AI</span><span class="d">5</span></div>
<div class="t " style="left:750px;top:195.76px;"><span class="d">0</span><span class="l" style="margin-right:-1.20px">.</span><span class="d">000000</span></div>
<div class="t " style="left:679px;top:208.8px;"><span class="d">6</span></div>
<div class="t " style="left:701px;top:208.8px;"><span class="l" style="margin-right:-2.40px">AI</span><span class="d">6</span></div>
<div class="t " style="left:750px;top:208.8px;"><span class="d">0</span><span class="l" style="margin-right:-1.20px">.</span><span class="d">000000</span></div>
<div class="t " style="left:679px;top:221.84px;"><span class="d">7</span></div>
<div class="t " style="left:701px;top:221.84px;"><span class="l" style="margin-right:-2.40px">AI</span><span class="d">7</span></div>
<div class="t " style="left:750px;top:221.84px;"><span class="d">0</span><span class="l" style="margin-right:-1.20px">.</span><span class="d">000000</span></div>
<div class="t " style="left:679px;top:234.88px;"><span class="d">8</span></div>
<div class="t " style="left:701px;top:234.88px;"><span class="l" style="margin-right:-2.40px">AI</span><span class="d">8</span></div>
<div class="t " style="left:750px;top:234.88px;"><span class="d">0</span><span class="l" style="margin-right:-1.20px">.</span><span class="d">000000</span></div>
<div class="t " style="left:679px;top:247.92px;"><span class="d">9</span></div>
<div class="t " style="left:701px;top:247.92px;"><span class="l" style="margin-right:-2.40px">AI</span><span class="d">9</span></div>
<div class="t " style="left:750px;top:247.92px;"><span class="d">0</span><span class="l" style="margin-right:-1.20px">.</span><span class="d">000000</span></div>
<div class="t " style="left:679px;top:260.96px;"><span class="d">10</span></div>
<div class="t " style="left:701px;top:260.96px;"><span class="l" style="margin-right:-2.40px">AI</span><span class="d">10</span></div>
<div class="t " style="left:750px;top:260.96px;"><span class="d">0</span><span class="l" style="margin-right:-1.20px">.</span><span class="d">000000</span></div>
<div class="t " style="left:679px;top:274px;"><span class="d">11</span></div>
<div class="t " style="left:701px;top:274px;"><span class="l" style="margin-right:-2.40px">AI</span><span class="d">11</span></div>
<div class="t " style="left:750px;top:274px;"><span class="d">0</span><span class="l" style="margin-right:-1.20px">.</span><span class="d">000000</span></div>
<div class="t " style="left:679px;top:287.04px;"><span class="d">12</span></div>
<div class="t " style="left:701px;top:287.04px;"><span class="l" style="margin-right:-2.40px">AI</span><span class="d">12</span></div>
<div class="t " style="left:750px;top:287.04px;"><span class="d">0</span><span class="l" style="margin-right:-1.20px">.</span><span class="d">000000</span></div>
<div class="t " style="left:679px;top:300.08px;"><span class="d">13</span></div>
<div class="t " style="left:701px;top:300.08px;"><span class="l" style="margin-right:-2.40px">AI</span><span class="d">13</span></div>
<div class="t " style="left:750px;top:300.08px;"><span class="d">0</span><span class="l" style="margin-right:-1.20px">.</span><span class="d">000000</span></div>
<div class="t " style="left:679px;top:313.12px;"><span class="d">14</span></div>
<div class="t " style="left:701px;top:313.12px;"><span class="l" style="margin-right:-2.40px">AI</span><span class="d">14</span></div>
<div class="t " style="left:750px;top:313.12px;"><span class="d">0</span><span class="l" style="margin-right:-1.20px">.</span><span class="d">000000</span></div>
<div class="t " style="left:679px;top:326.16px;"><span class="d">15</span></div>
<div class="t " style="left:701px;top:326.16px;"><span class="l" style="margin-right:-2.40px">AI</span><span class="d">15</span></div>
<div class="t " style="left:750px;top:326.16px;"><span class="d">0</span><span class="l" style="margin-right:-1.20px">.</span><span class="d">000000</span></div>
<div class="t " style="left:679px;top:339.2px;"><span class="d">16</span></div>
<div class="t " style="left:701px;top:339.2px;"><span class="l" style="margin-right:-2.40px">AI</span><span class="d">16</span></div>
<div class="t " style="left:750px;top:339.2px;"><span class="d">0</span><span class="l" style="margin-right:-1.20px">.</span><span class="d">000000</span></div>
<div class="btn" style="left:872px;top:389px;width:64px;height:16.5px;line-height:17px">清空</div>
<div class="edit" style="left:673px;top:412px;width:265px;height:274px"></div>
<div class="abs" style="left:925px;top:414px;width:15px;height:274px;background:linear-gradient(90deg,#ececec 0,#f4f4f4 50%,#ececec 100%)"></div>
<svg class="abs" style="left:929.5px;top:421px" width="8" height="5" viewBox="0 0 8 5"><path d="M.3 4.6L4 .6L7.7 4.6Z" fill="#a3a3a3"/></svg>
<svg class="abs" style="left:929.5px;top:677px" width="8" height="5" viewBox="0 0 8 5"><path d="M.3 .4L4 4.4L7.7 .4Z" fill="#8a8a8a"/></svg>
<div class="t " style="left:737px;top:429.03px;"><span class="l" style="margin-right:-3.60px">DAM</span>调试软件</div>
<div class="t " style="left:677px;top:465.12px;">【增加设备型号】<span class="l" style="margin-right:-1.20px">&nbsp;</span>修改<span class="l" style="margin-right:-2.40px">&nbsp;&nbsp;</span>设备表<span class="l" style="margin-right:-9.61px">.xml.xml</span></div>
<div class="t " style="left:677px;top:489.18px;">【模拟量<span class="l" style="margin-right:-1.20px">&nbsp;</span>单位、线性转换、名称】<span class="l" style="margin-right:-1.20px">&nbsp;</span>修改<span class="l" style="margin-right:-1.20px">&nbsp;</span>参数</div>
<div class="t " style="left:677px;top:501.21px;">单位<span class="l" style="margin-right:-4.80px">.xml</span></div>
<div class="t " style="left:677px;top:525.27px;">【继电器<span class="l" style="margin-right:-1.20px">&nbsp;</span>名称】<span class="l" style="margin-right:-1.20px">&nbsp;</span>修改<span class="l" style="margin-right:-2.40px">&nbsp;&nbsp;</span>设备表<span class="l" style="margin-right:-9.61px">.xml.xml</span></div>
<div class="t " style="left:677px;top:549.33px;">【光耦<span class="l" style="margin-right:-1.20px">&nbsp;</span>名称】<span class="l" style="margin-right:-1.20px">&nbsp;</span>修改<span class="l" style="margin-right:-2.40px">&nbsp;&nbsp;</span>设备表<span class="l" style="margin-right:-9.61px">.xml.xml</span></div>
<div class="t " style="left:677px;top:573.39px;"><span class="d">2014</span>年<span class="d">12</span>月<span class="d">19</span>日<span class="l" style="margin-right:-2.40px">&nbsp;&nbsp;</span>增加闪开闪闭功能</div>
<div class="t " style="left:677px;top:585.42px;"><span class="d">2014</span>年<span class="d">12</span>月<span class="d">25</span>日<span class="l" style="margin-right:-2.40px">&nbsp;&nbsp;</span>增加<span class="l" style="margin-right:-2.40px">DO</span><span class="d">1600</span></div>
<div class="t " style="left:677px;top:597.45px;"><span class="d">2015</span>年<span class="d">01</span>月<span class="d">16</span>日<span class="l" style="margin-right:-2.40px">&nbsp;&nbsp;</span>增加<span class="l" style="margin-right:-2.40px">PT</span><span class="d">03</span><span class="l" style="margin-right:-3.60px">,PT</span><span class="d">02</span><span class="l" style="margin-right:-3.60px">,PT</span><span class="d">08</span><span class="l" style="margin-right:-3.60px">,PT</span><span class="d">12</span>系</div>
<div class="t " style="left:677px;top:609.48px;">列</div>
</div>
</body></html>
